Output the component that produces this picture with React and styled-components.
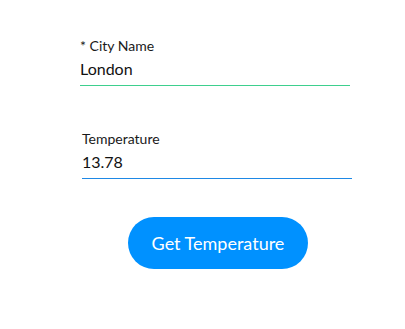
import React, { useState } from 'react';
import styled, { createGlobalStyle } from 'styled-components';

const GlobalStyle = createGlobalStyle`
  html, body {
    margin: 0;
    padding: 0;
    background: #ffffff;
    font-family: Lato, "Open Sans", sans-serif;
  }
`;

const Page = styled.div`
  width: 405px;
  height: 329px;
  padding-top: 37px;
  box-sizing: border-box;
  display: flex;
  flex-direction: column;
`;

const Field = styled.label`
  display: flex;
  flex-direction: column;
  width: 270px;
  margin-left: ${(p) => p.$offset}px;
  margin-bottom: ${(p) => p.$gap}px;
`;

const Label = styled.span`
  font-size: 14px;
  line-height: 17px;
  color: #1a1a1a;
`;

const Input = styled.input`
  border: none;
  border-bottom: 1px solid ${(p) => p.$line};
  outline: none;
  padding: 5px 0 6px;
  font-family: Lato, "Open Sans", sans-serif;
  font-size: 16px;
  line-height: 20px;
  color: #111;
  background: transparent;
`;

const Actions = styled.div`
  display: flex;
  justify-content: center;
  padding-left: 31px;
  box-sizing: border-box;
  width: 405px;
`;

const Button = styled.button`
  width: 180px;
  height: 52px;
  border: none;
  border-radius: 26px;
  background: #0091ff;
  color: #fff;
  font-family: Lato, "Open Sans", sans-serif;
  font-size: 18px;
  cursor: pointer;
`;

export default function App() {
  const [city, setCity] = useState('London');
  const [temp, setTemp] = useState('13.78');

  return (
    <>
      <GlobalStyle />
      <Page>
        <Field $offset={80} $gap={44}>
          <Label>* City Name</Label>
          <Input $line="#3ecf8e" value={city} onChange={(e) => setCity(e.target.value)} />
        </Field>
        <Field $offset={82} $gap={38}>
          <Label>Temperature</Label>
          <Input $line="#1e88e5" value={temp} onChange={(e) => setTemp(e.target.value)} />
        </Field>
        <Actions>
          <Button>Get Temperature</Button>
        </Actions>
      </Page>
    </>
  );
}
